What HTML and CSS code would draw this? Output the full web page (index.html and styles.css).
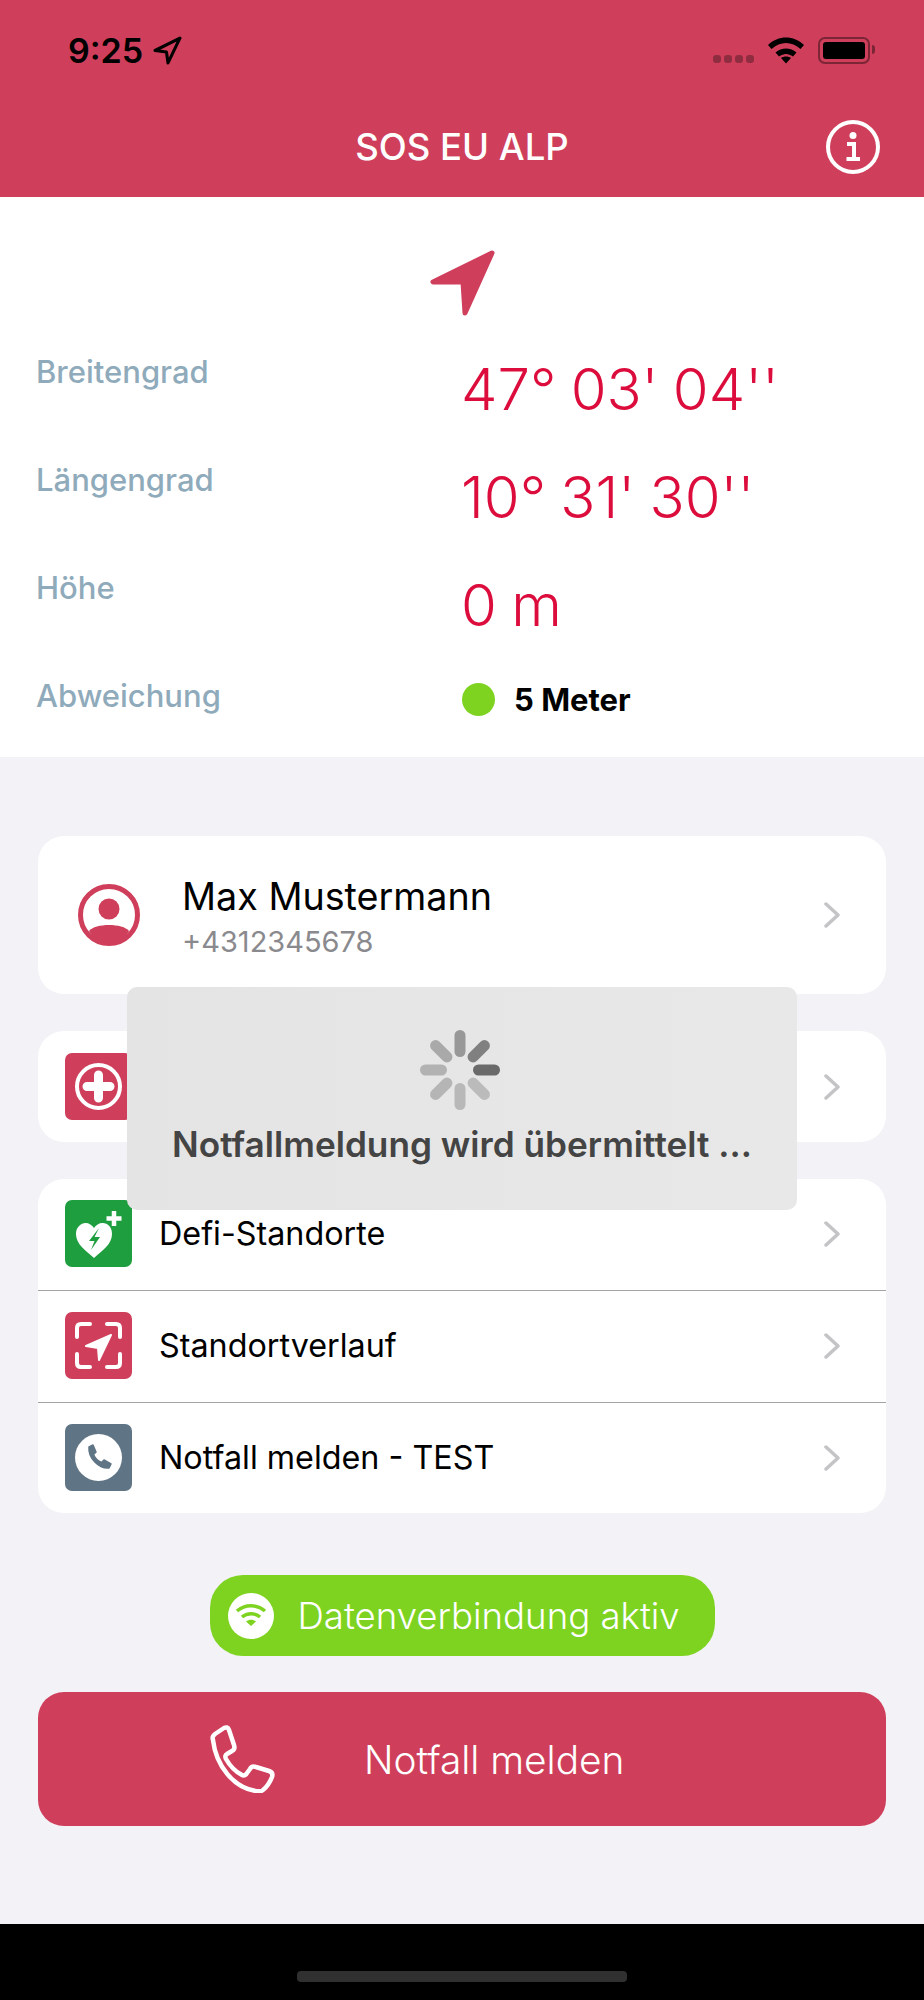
FILE: index.html
```html
<!DOCTYPE html>
<html lang="de">
<head>
  <meta charset="UTF-8" />
  <title>SOS EU ALP</title>
  <link rel="stylesheet" href="styles.css">
</head>
<body>
  <div class="app">
    <header class="topbar">
      <div class="status-bar">
        <div class="status-left">
          <span class="clock">9:25</span>
          <svg class="status-arrow" viewBox="0 0 28 28"><path d="M26 2 2 14 13 15.500 14.500 26Z" fill="none" stroke="#000" stroke-width="3" stroke-linejoin="round"/></svg>
        </div>
        <div class="status-right">
          <span class="signal"><i></i><i></i><i></i><i></i></span>
          <svg class="wifi" viewBox="0 0 36 28"><path d="M0 9C10 -1 26 -1 36 9L32.500 13C24 5 12 5 3.500 13ZM7.500 16.500C13.500 11 22.500 11 28.500 16.500L25 20.500C20.500 17 15.500 17 11 20.500ZM13 22C16 20 20 20 23 22L18 27.500Z" fill="#000"/></svg>
          <span class="battery"><span class="battery-fill"></span></span>
        </div>
      </div>
      <div class="navbar">
        <h1 class="app-title">SOS EU ALP</h1>
        <svg class="info-icon" viewBox="0 0 54 54"><circle cx="27" cy="27" r="25" fill="none" stroke="#fff" stroke-width="4"/><circle cx="27" cy="15.500" r="3.500" fill="#fff"/><path d="M21 24H28V38M20.500 39H34" fill="none" stroke="#fff" stroke-width="4"/></svg>
      </div>
    </header>

    <section class="position">
      <div class="compass">
        <svg viewBox="0 0 70 70"><path d="M64 4 5 33 H35 L37 64 Z" fill="#cf3f5b" stroke="#cf3f5b" stroke-width="5" stroke-linejoin="round"/></svg>
      </div>
      <div class="coords">
        <div class="coord-label">Breitengrad</div>
        <div class="coord-value">47° 03' 04''</div>
        <div class="coord-label">Längengrad</div>
        <div class="coord-value">10° 31' 30''</div>
        <div class="coord-label">Höhe</div>
        <div class="coord-value">0 m</div>
        <div class="coord-label">Abweichung</div>
        <div class="accuracy"><span class="accuracy-dot"></span>5 Meter</div>
      </div>
    </section>

    <main class="content">
      <div class="card person-card">
        <svg class="person-icon" viewBox="0 0 62 62">
          <circle cx="31" cy="31" r="28.500" fill="none" stroke="#cf3f5b" stroke-width="5"/>
          <circle cx="31" cy="25" r="10.500" fill="#cf3f5b"/>
          <path d="M11 47C17 39 45 39 51 47 46 57 38 60 31 60 24 60 16 57 11 47Z" fill="#cf3f5b"/>
        </svg>
        <div class="person-text">
          <div class="person-name">Max Mustermann</div>
          <div class="person-phone">+4312345678</div>
        </div>
        <svg class="chevron" viewBox="0 0 16 26"><path d="M2 2 14 13 2 24" /></svg>
      </div>

      <div class="card single-card">
        <div class="row">
          <span class="tile tile-red">
            <svg viewBox="0 0 67 67"><circle cx="33.500" cy="33.500" r="21.500" fill="none" stroke="#fff" stroke-width="4"/><path d="M33.500 22V45M22 33.500H45" stroke="#fff" stroke-width="9" stroke-linecap="round"/></svg>
          </span>
          <svg class="chevron" viewBox="0 0 16 26"><path d="M2 2 14 13 2 24" /></svg>
        </div>
      </div>

      <div class="card list-card">
        <div class="row">
          <span class="tile tile-green">
            <svg viewBox="0 0 67 67">
              <path d="M29 58C20 50 11 44 11 34 11 27 16 23 20.500 23 24 23 27 25 29 28 31 25 34 23 37.500 23 43 23 47 27 47 34 47 44 38 50 29 58Z" fill="#fff"/>
              <path d="M34 28 24 41H29.500L26 50 35 37H29.500Z" fill="#1f9e3f"/>
              <path d="M49 11V26M41.500 18.500H56.500" stroke="#fff" stroke-width="4.500"/>
            </svg>
          </span>
          <span class="row-label">Defi-Standorte</span>
          <svg class="chevron" viewBox="0 0 16 26"><path d="M2 2 14 13 2 24" /></svg>
        </div>
        <div class="row">
          <span class="tile tile-red">
            <svg viewBox="0 0 67 67">
              <path d="M25 12H16Q12 12 12 16V25M42 12H51Q55 12 55 16V25M25 55H16Q12 55 12 51V42M42 55H51Q55 55 55 51V42" fill="none" stroke="#fff" stroke-width="4" stroke-linecap="round"/>
              <path d="M46 23 21 34 33 36 34 48Z" fill="#fff" stroke="#fff" stroke-width="2" stroke-linejoin="round"/>
            </svg>
          </span>
          <span class="row-label">Standortverlauf</span>
          <svg class="chevron" viewBox="0 0 16 26"><path d="M2 2 14 13 2 24" /></svg>
        </div>
        <div class="row">
          <span class="tile tile-slate">
            <svg viewBox="0 0 67 67">
              <circle cx="33.500" cy="33.500" r="23.500" fill="#fff"/>
              <path d="M24 23 28 21 31 28 28.500 30.500C30 34 33 37 36.500 38.500L39 36 46 40 44 44C34 45 23 34 24 23Z" fill="#5f7585" stroke="#5f7585" stroke-width="1.500" stroke-linejoin="round"/>
            </svg>
          </span>
          <span class="row-label">Notfall melden - TEST</span>
          <svg class="chevron" viewBox="0 0 16 26"><path d="M2 2 14 13 2 24" /></svg>
        </div>
      </div>

      <div class="data-status">
        <span class="data-pill">
          <svg viewBox="0 0 46 46"><circle cx="23" cy="23" r="23" fill="#fff"/><path d="M9 18C17 11 29 11 37 18M14 24C19 19.500 27 19.500 32 24" fill="none" stroke="#7ed321" stroke-width="3.500"/><path d="M18 28.500C21 26 25 26 28 28.500L23 33Z" fill="#7ed321"/></svg>
          Datenverbindung aktiv
        </span>
      </div>

      <button class="emergency-btn" type="button">
        <svg viewBox="0 0 66 68"><path d="M4 15C3 12 4 11 6 9L15 3C17 2 19 2 20 5L25 20C26 23 25 25 23 26L18 29C16 30 16 32 17 34 21 41 27 47 33 50 35 51 37 50 38 48L41 44C42 42 44 41 47 42L60 46C63 47 64 49 63 52 61 57 58 62 54 65 52 67 50 66 47 66 25 63 7 41 4 15Z" fill="none" stroke="#fff" stroke-width="4.500" stroke-linejoin="round"/></svg>
        <span>Notfall melden</span>
      </button>
    </main>

    <footer class="home-area"><span class="home-indicator"></span></footer>

    <div class="progress-hud">
      <svg class="spinner" viewBox="-40 -40 80 80">
        <rect x="13" y="-5.500" width="27" height="11" rx="5.500" fill="#6a6a6a"/>
        <rect x="13" y="-5.500" width="27" height="11" rx="5.500" fill="#808080" transform="rotate(-45)"/>
        <rect x="13" y="-5.500" width="27" height="11" rx="5.500" fill="#989898" transform="rotate(-90)"/>
        <rect x="13" y="-5.500" width="27" height="11" rx="5.500" fill="#a9a9a9" transform="rotate(-135)"/>
        <rect x="13" y="-5.500" width="27" height="11" rx="5.500" fill="#b2b2b2" transform="rotate(180)"/>
        <rect x="13" y="-5.500" width="27" height="11" rx="5.500" fill="#b5b5b5" transform="rotate(135)"/>
        <rect x="13" y="-5.500" width="27" height="11" rx="5.500" fill="#b8b8b8" transform="rotate(90)"/>
        <rect x="13" y="-5.500" width="27" height="11" rx="5.500" fill="#bbbbbb" transform="rotate(45)"/>
      </svg>
      <div class="hud-text">Notfallmeldung wird übermittelt ...</div>
    </div>
  </div>
</body>
</html>
```
FILE: styles.css
```css
body {
  margin: 0;
  font-family: 'Inter', 'Liberation Sans', sans-serif;
  background-color: #000;
}
.app {
  position: relative;
  width: 924px;
  height: 2000px;
  display: flex;
  flex-direction: column;
  background-color: #f2f2f7;
  overflow: hidden;
}

/* top bar */
.topbar {
  height: 197px;
  background-color: #cf3f5b;
  box-sizing: border-box;
}
.status-bar {
  height: 100px;
  padding: 30px 48px 0 68px;
  box-sizing: border-box;
  display: flex;
  justify-content: space-between;
}
.status-left {
  display: flex;
  align-items: center;
  height: 40px;
  gap: 10px;
}
.clock {
  font-size: 34px;
  font-weight: 600;
  color: #000;
}
.status-arrow {
  width: 29px;
  height: 29px;
}
.status-right {
  display: flex;
  align-items: center;
  height: 40px;
  gap: 14px;
}
.signal {
  display: flex;
  gap: 3px;
  margin-top: 18px;
}
.signal i {
  width: 8px;
  height: 8px;
  border-radius: 3px;
  background-color: rgba(0,0,0,0.3);
}
.wifi {
  width: 36px;
  height: 28px;
}
.battery {
  position: relative;
  width: 52px;
  height: 27px;
  margin-right: 6px;
  box-sizing: border-box;
  border: 2px solid rgba(0,0,0,0.4);
  border-radius: 7px;
  padding: 3px;
  display: flex;
}
.battery::after {
  content: '';
  position: absolute;
  right: -7px;
  top: 6px;
  width: 3px;
  height: 9px;
  border-radius: 0 3px 3px 0;
  background-color: rgba(0,0,0,0.4);
}
.battery-fill {
  flex: 1;
  background-color: #000;
  border-radius: 3px;
}
.navbar {
  position: relative;
  height: 97px;
  display: flex;
  align-items: center;
  justify-content: center;
}
.app-title {
  margin: 0;
  font-size: 36.500px;
  font-weight: 500;
  color: #fff;
  padding-bottom: 3px;
}
.info-icon {
  position: absolute;
  right: 44px;
  top: 20px;
  width: 54px;
  height: 54px;
}

/* position block */
.position {
  height: 560px;
  background-color: #fff;
  box-sizing: border-box;
  padding-top: 52px;
}
.compass {
  height: 86px;
  padding-left: 428px;
}
.compass svg {
  width: 70px;
  height: 70px;
  display: block;
}
.coords {
  display: grid;
  grid-template-columns: 425px 1fr;
  padding-left: 36px;
}
.coord-label {
  font-size: 31px;
  line-height: 74px;
  font-weight: 500;
  color: #8fabbb;
}
.coord-value {
  font-size: 58px;
  line-height: 108px;
  font-weight: 300;
  word-spacing: -2px;
  color: #dc0d3c;
}
.accuracy {
  height: 80px;
  display: flex;
  align-items: center;
  gap: 19px;
  padding-left: 1px;
  font-size: 31px;
  font-weight: 700;
  color: #000;
}
.accuracy-dot {
  width: 33px;
  height: 33px;
  border-radius: 50%;
  background-color: #7ed321;
}

/* cards */
.content {
  flex: 1;
  padding: 79px 38px 0;
  display: flex;
  flex-direction: column;
}
.card {
  background-color: #fff;
  border-radius: 26px;
}
.person-card {
  height: 158px;
  display: flex;
  align-items: center;
  padding: 0 46px 0 40px;
  margin-bottom: 37px;
}
.person-icon {
  width: 62px;
  height: 62px;
  margin-right: 42px;
}
.person-text {
  flex: 1;
  padding-top: 3px;
}
.person-name {
  font-size: 37.700px;
  line-height: 48px;
  color: #000;
}
.person-phone {
  font-size: 29px;
  line-height: 40px;
  margin-top: 2px;
  color: #8a8a8e;
}
.single-card {
  height: 111px;
  margin-bottom: 37px;
}
.list-card {
  height: 334px;
}
.row {
  height: 111px;
  display: flex;
  align-items: center;
  padding: 0 46px 0 27px;
  box-sizing: border-box;
}
.list-card .row {
  padding-bottom: 2px;
}
.list-card .row + .row {
  border-top: 1px solid #a4a4a4;
  height: 112px;
}
.tile {
  width: 67px;
  height: 67px;
  border-radius: 7px;
  flex-shrink: 0;
}
.tile svg {
  display: block;
  width: 67px;
  height: 67px;
}
.tile-red {
  background-color: #cf3f5b;
}
.tile-green {
  background-color: #1f9e3f;
}
.tile-slate {
  background-color: #5f7585;
}
.row-label {
  margin-left: 27px;
  font-size: 32.300px;
  color: #000;
}
.chevron {
  width: 16px;
  height: 26px;
  margin-left: auto;
  fill: none;
  stroke: #c4c4c6;
  stroke-width: 3.500;
  stroke-linecap: round;
  stroke-linejoin: round;
}

/* data connection + call button */
.data-status {
  display: flex;
  justify-content: center;
  margin-top: 62px;
  margin-bottom: 36px;
}
.data-pill {
  width: 505px;
  height: 81px;
  box-sizing: border-box;
  padding-left: 18px;
  display: flex;
  align-items: center;
  gap: 24px;
  border-radius: 33px;
  background-color: #7ed321;
  color: #fff;
  font-size: 36.600px;
  font-weight: 300;
}
.data-pill svg {
  width: 46px;
  height: 46px;
}
.emergency-btn {
  height: 134px;
  border: none;
  border-radius: 26px;
  background-color: #cf3f5b;
  color: #fff;
  font-family: inherit;
  font-size: 38.800px;
  font-weight: 300;
  display: flex;
  align-items: center;
  padding: 0 0 0 171px;
  gap: 89px;
}
.emergency-btn svg {
  width: 66px;
  height: 68px;
}

/* bottom */
.home-area {
  height: 76px;
  background-color: #000;
  display: flex;
  justify-content: center;
  align-items: flex-end;
  padding-bottom: 18px;
  box-sizing: border-box;
}
.home-indicator {
  width: 330px;
  height: 11px;
  border-radius: 4px;
  background-color: #303030;
}

/* overlay */
.progress-hud {
  position: absolute;
  left: 127px;
  top: 987px;
  width: 670px;
  height: 223px;
  box-sizing: border-box;
  border-radius: 10px;
  background: linear-gradient(90deg, #e4e4e4, #e8e8e8);
  display: flex;
  flex-direction: column;
  align-items: center;
  padding-top: 43px;
}
.spinner {
  width: 80px;
  height: 80px;
  margin-right: 4px;
}
.hud-text {
  margin-top: 13px;
  font-size: 35.200px;
  font-weight: 600;
  color: #444;
}
```
